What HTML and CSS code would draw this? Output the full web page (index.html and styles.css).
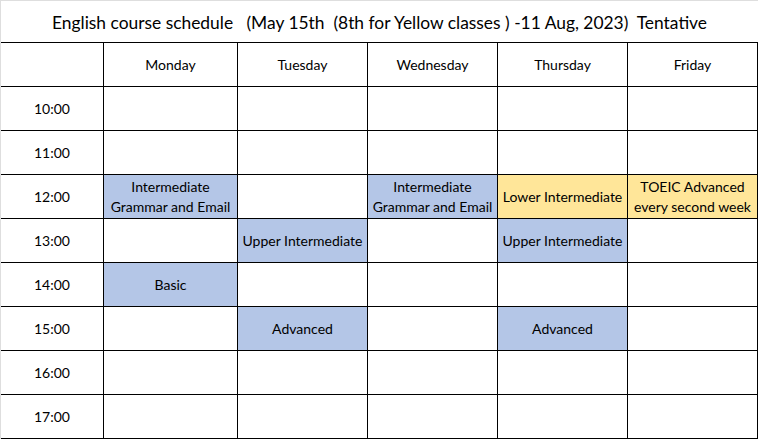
FILE: index.html
```html
<!DOCTYPE html>
<html lang="en">
<head>
<meta charset="utf-8">
<title>English course schedule</title>
<link rel="stylesheet" href="styles.css">
</head>
<body>
<div class="sheet">
  <div class="title">English course schedule   (May 15th  (8th for Yellow classes ) -11 Aug, 2023)  Tentative</div>
  <div class="grid">
    <div class="cell"></div>
    <div class="cell">Monday</div>
    <div class="cell">Tuesday</div>
    <div class="cell">Wednesday</div>
    <div class="cell">Thursday</div>
    <div class="cell">Friday</div>

    <div class="cell">10:00</div>
    <div class="cell"></div><div class="cell"></div><div class="cell"></div><div class="cell"></div><div class="cell"></div>

    <div class="cell">11:00</div>
    <div class="cell"></div><div class="cell"></div><div class="cell"></div><div class="cell"></div><div class="cell"></div>

    <div class="cell">12:00</div>
    <div class="cell blue">Intermediate<br>Grammar and Email</div>
    <div class="cell"></div>
    <div class="cell blue">Intermediate<br>Grammar and Email</div>
    <div class="cell yellow">Lower Intermediate</div>
    <div class="cell yellow">TOEIC Advanced<br>every second week</div>

    <div class="cell">13:00</div>
    <div class="cell"></div>
    <div class="cell blue">Upper Intermediate</div>
    <div class="cell"></div>
    <div class="cell blue">Upper Intermediate</div>
    <div class="cell"></div>

    <div class="cell">14:00</div>
    <div class="cell blue">Basic</div>
    <div class="cell"></div><div class="cell"></div><div class="cell"></div><div class="cell"></div>

    <div class="cell">15:00</div>
    <div class="cell"></div>
    <div class="cell blue">Advanced</div>
    <div class="cell"></div>
    <div class="cell blue">Advanced</div>
    <div class="cell"></div>

    <div class="cell">16:00</div>
    <div class="cell"></div><div class="cell"></div><div class="cell"></div><div class="cell"></div><div class="cell"></div>

    <div class="cell">17:00</div>
    <div class="cell"></div><div class="cell"></div><div class="cell"></div><div class="cell"></div><div class="cell"></div>
  </div>
</div>
</body>
</html>
```

FILE: styles.css
```css
html, body {
  margin: 0;
  padding: 0;
  background: #ffffff;
}

body {
  font-family: "Lato", "Open Sans", "Liberation Sans", sans-serif;
  color: #000000;
}

.sheet {
  width: 757px;
  height: 438px;
  border-left: 1px solid #dedede;
  border-top: 1px solid #dedede;
  display: flex;
  flex-direction: column;
}

.title {
  height: 41px;
  display: flex;
  align-items: center;
  justify-content: center;
  white-space: pre;
  font-size: 17.4px;
  padding-top: 1px;
  box-sizing: border-box;
}

.grid {
  display: grid;
  grid-template-columns: 102px 133px 129px 129px 129px 129px;
  grid-auto-rows: 43px;
  gap: 1px;
  padding: 1px 1px 1px 0;
  background: #000000;
}

.cell {
  background: #ffffff;
  display: flex;
  align-items: center;
  justify-content: center;
  text-align: center;
  font-size: 14px;
  line-height: 20px;
  white-space: nowrap;
}

.blue {
  background: #b4c6e7;
}

.yellow {
  background: #ffe699;
}
```
